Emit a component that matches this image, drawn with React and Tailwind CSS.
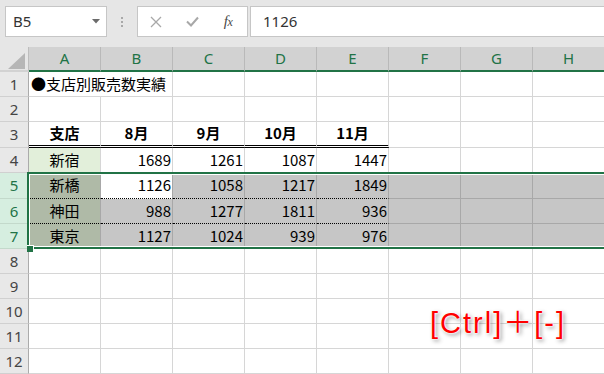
import React from "react";

const COLS = ["A", "B", "C", "D", "E", "F", "G", "H"];
const DATA = {
  1: ["●支店別販売数実績"],
  3: ["支店", "8月", "9月", "10月", "11月"],
  4: ["新宿", "1689", "1261", "1087", "1447"],
  5: ["新橋", "1126", "1058", "1217", "1849"],
  6: ["神田", "988", "1277", "1811", "936"],
  7: ["東京", "1127", "1024", "939", "976"],
};
const ROWS = [1, 2, 3, 4, 5, 6, 7, 8, 9, 10, 11, 12];

function cellClass(r, c) {
  const sel = r >= 5 && r <= 7;
  const cls = [
    "flex items-center whitespace-nowrap border-r border-b text-[15px] text-black font-['Noto_Sans_CJK_JP',sans-serif]",
  ];
  if (sel) {
    if (c === 0) cls.push("bg-[#afbaa7]");
    else if (r === 5 && c === 1) cls.push("bg-white");
    else cls.push("bg-[#c6c6c6]");
    cls.push("border-[#a8a8a8]");
  } else {
    cls.push(r === 4 && c === 0 ? "bg-[#e2efda]" : "bg-white");
    cls.push("border-[#d6d6d6]");
  }
  if (r === 3 && c <= 4) cls.push("border-b-[3px] border-b-black [border-bottom-style:double]");
  if ((r === 5 || r === 6) && c <= 4) cls.push("border-b-black [border-bottom-style:dotted]");
  if (r === 1 && c === 0) cls.push("border-r-0 justify-start pl-[2px] relative z-10");
  else if (c === 0 || r === 3) cls.push("justify-center");
  else cls.push("justify-end pr-[1px]");
  if (r === 3) cls.push("font-bold");
  return cls.join(" ");
}

export default function App() {
  return (
    <div className="relative w-[604px] h-[374px] overflow-hidden bg-white font-['Noto_Sans',sans-serif]">
      {/* toolbar */}
      <div className="h-[47px] bg-[#e6e6e6] flex items-start pt-[6px]">
        <div className="ml-[5px] w-[102px] h-[31px] bg-white border border-[#c6c6c6] flex items-center justify-between pl-[7px] pr-[6px]">
          <span className="text-[15px] text-[#333] leading-none font-['Noto_Sans',sans-serif]">B5</span>
          <svg width="8" height="5" viewBox="0 0 8 5">
            <path d="M0 0 L8 0 L4 4.5 Z" fill="#6b6b6b" />
          </svg>
        </div>
        <div className="w-[30px] h-[31px] flex flex-col items-center justify-center gap-[2px]">
          <span className="w-[2px] h-[2px] bg-[#a8a8a8]" />
          <span className="w-[2px] h-[2px] bg-[#a8a8a8]" />
          <span className="w-[2px] h-[2px] bg-[#a8a8a8]" />
        </div>
        <div className="w-[111px] h-[31px] bg-white border border-[#c6c6c6] flex items-center">
          <div className="w-[36px] flex justify-center">
            <svg width="12" height="12" viewBox="0 0 12 12">
              <path d="M1 1 L11 11 M11 1 L1 11" stroke="#a8a8a8" strokeWidth="1.3" fill="none" />
            </svg>
          </div>
          <div className="w-[36px] flex justify-center">
            <svg width="13" height="11" viewBox="0 0 13 11">
              <path d="M1 5.5 L5 9.5 L12 1.5" stroke="#a8a8a8" strokeWidth="2" fill="none" />
            </svg>
          </div>
          <div className="w-[36px] flex justify-center">
            <span className="text-[15px] leading-none italic font-['Liberation_Serif',serif] text-[#4a4a4a] tracking-[-0.5px]">
              f<span className="text-[12px]">x</span>
            </span>
          </div>
        </div>
        <div className="ml-[2px] flex-1 h-[31px] bg-white border border-r-0 border-[#c6c6c6] flex items-center pl-[12px]">
          <span className="text-[15px] text-[#333] leading-none font-['Noto_Sans',sans-serif]">1126</span>
        </div>
      </div>

      {/* grid */}
      <div className="relative grid grid-cols-[29px_repeat(8,72px)] grid-rows-[25px_25px_25px_26px_25px_26px_25px_25px_25px_25px_25px_25px_25px]">
        <div className="bg-[#e6e6e6] border-r border-[#bdbdbd] border-b-2 border-b-[#d2d2d2] flex items-end justify-end pr-[3px] pb-[1px]">
          <svg width="17" height="16" viewBox="0 0 17 16">
            <path d="M17 0 L17 16 L0 16 Z" fill="#b6b6b6" />
          </svg>
        </div>
        {COLS.map((L) => (
          <div
            key={L}
            className="bg-[#d2d2d2] border-r border-[#b9b9b9] border-b-2 border-b-[#217346] flex items-center justify-center text-[15px] text-[#217346]"
          >
            {L}
          </div>
        ))}
        {ROWS.map((r) => {
          const sel = r >= 5 && r <= 7;
          const vals = DATA[r] || [];
          return (
            <React.Fragment key={r}>
              <div
                className={
                  sel
                    ? "bg-[#d6eee0] border-r border-[#ababab] border-b border-b-[#c3d9cb] flex items-center justify-center text-[15px] text-[#217346]"
                    : "bg-[#e8e8e8] border-r border-[#ababab] border-b border-b-[#d0d0d0] flex items-center justify-center text-[15px] text-[#444]"
                }
              >
                {r}
              </div>
              {COLS.map((L, c) => (
                <div key={L} className={cellClass(r, c)}>
                  {vals[c] || ""}
                </div>
              ))}
            </React.Fragment>
          );
        })}

        {/* selection border */}
        <div className="absolute left-[27px] top-[125px] w-[600px] h-[77px] border-2 border-[#217346] pointer-events-none">
          <div className="absolute inset-0 border border-white" />
        </div>
        <div className="absolute left-[27px] top-[198px] w-[7px] h-[7px] bg-[#217346] border-t border-r border-white" />
      </div>

      {/* annotation */}
      <div className="absolute left-[430px] top-[309px] text-[29px] leading-none tracking-[2px] text-[#ff0000] font-['Liberation_Sans','Noto_Sans_CJK_JP',sans-serif] [text-shadow:0_0_2px_#fff,0_0_2px_#fff,0_0_2px_#fff,2px_2px_4px_rgba(0,0,0,0.45)]">
        [Ctrl]＋[-]
      </div>
    </div>
  );
}
